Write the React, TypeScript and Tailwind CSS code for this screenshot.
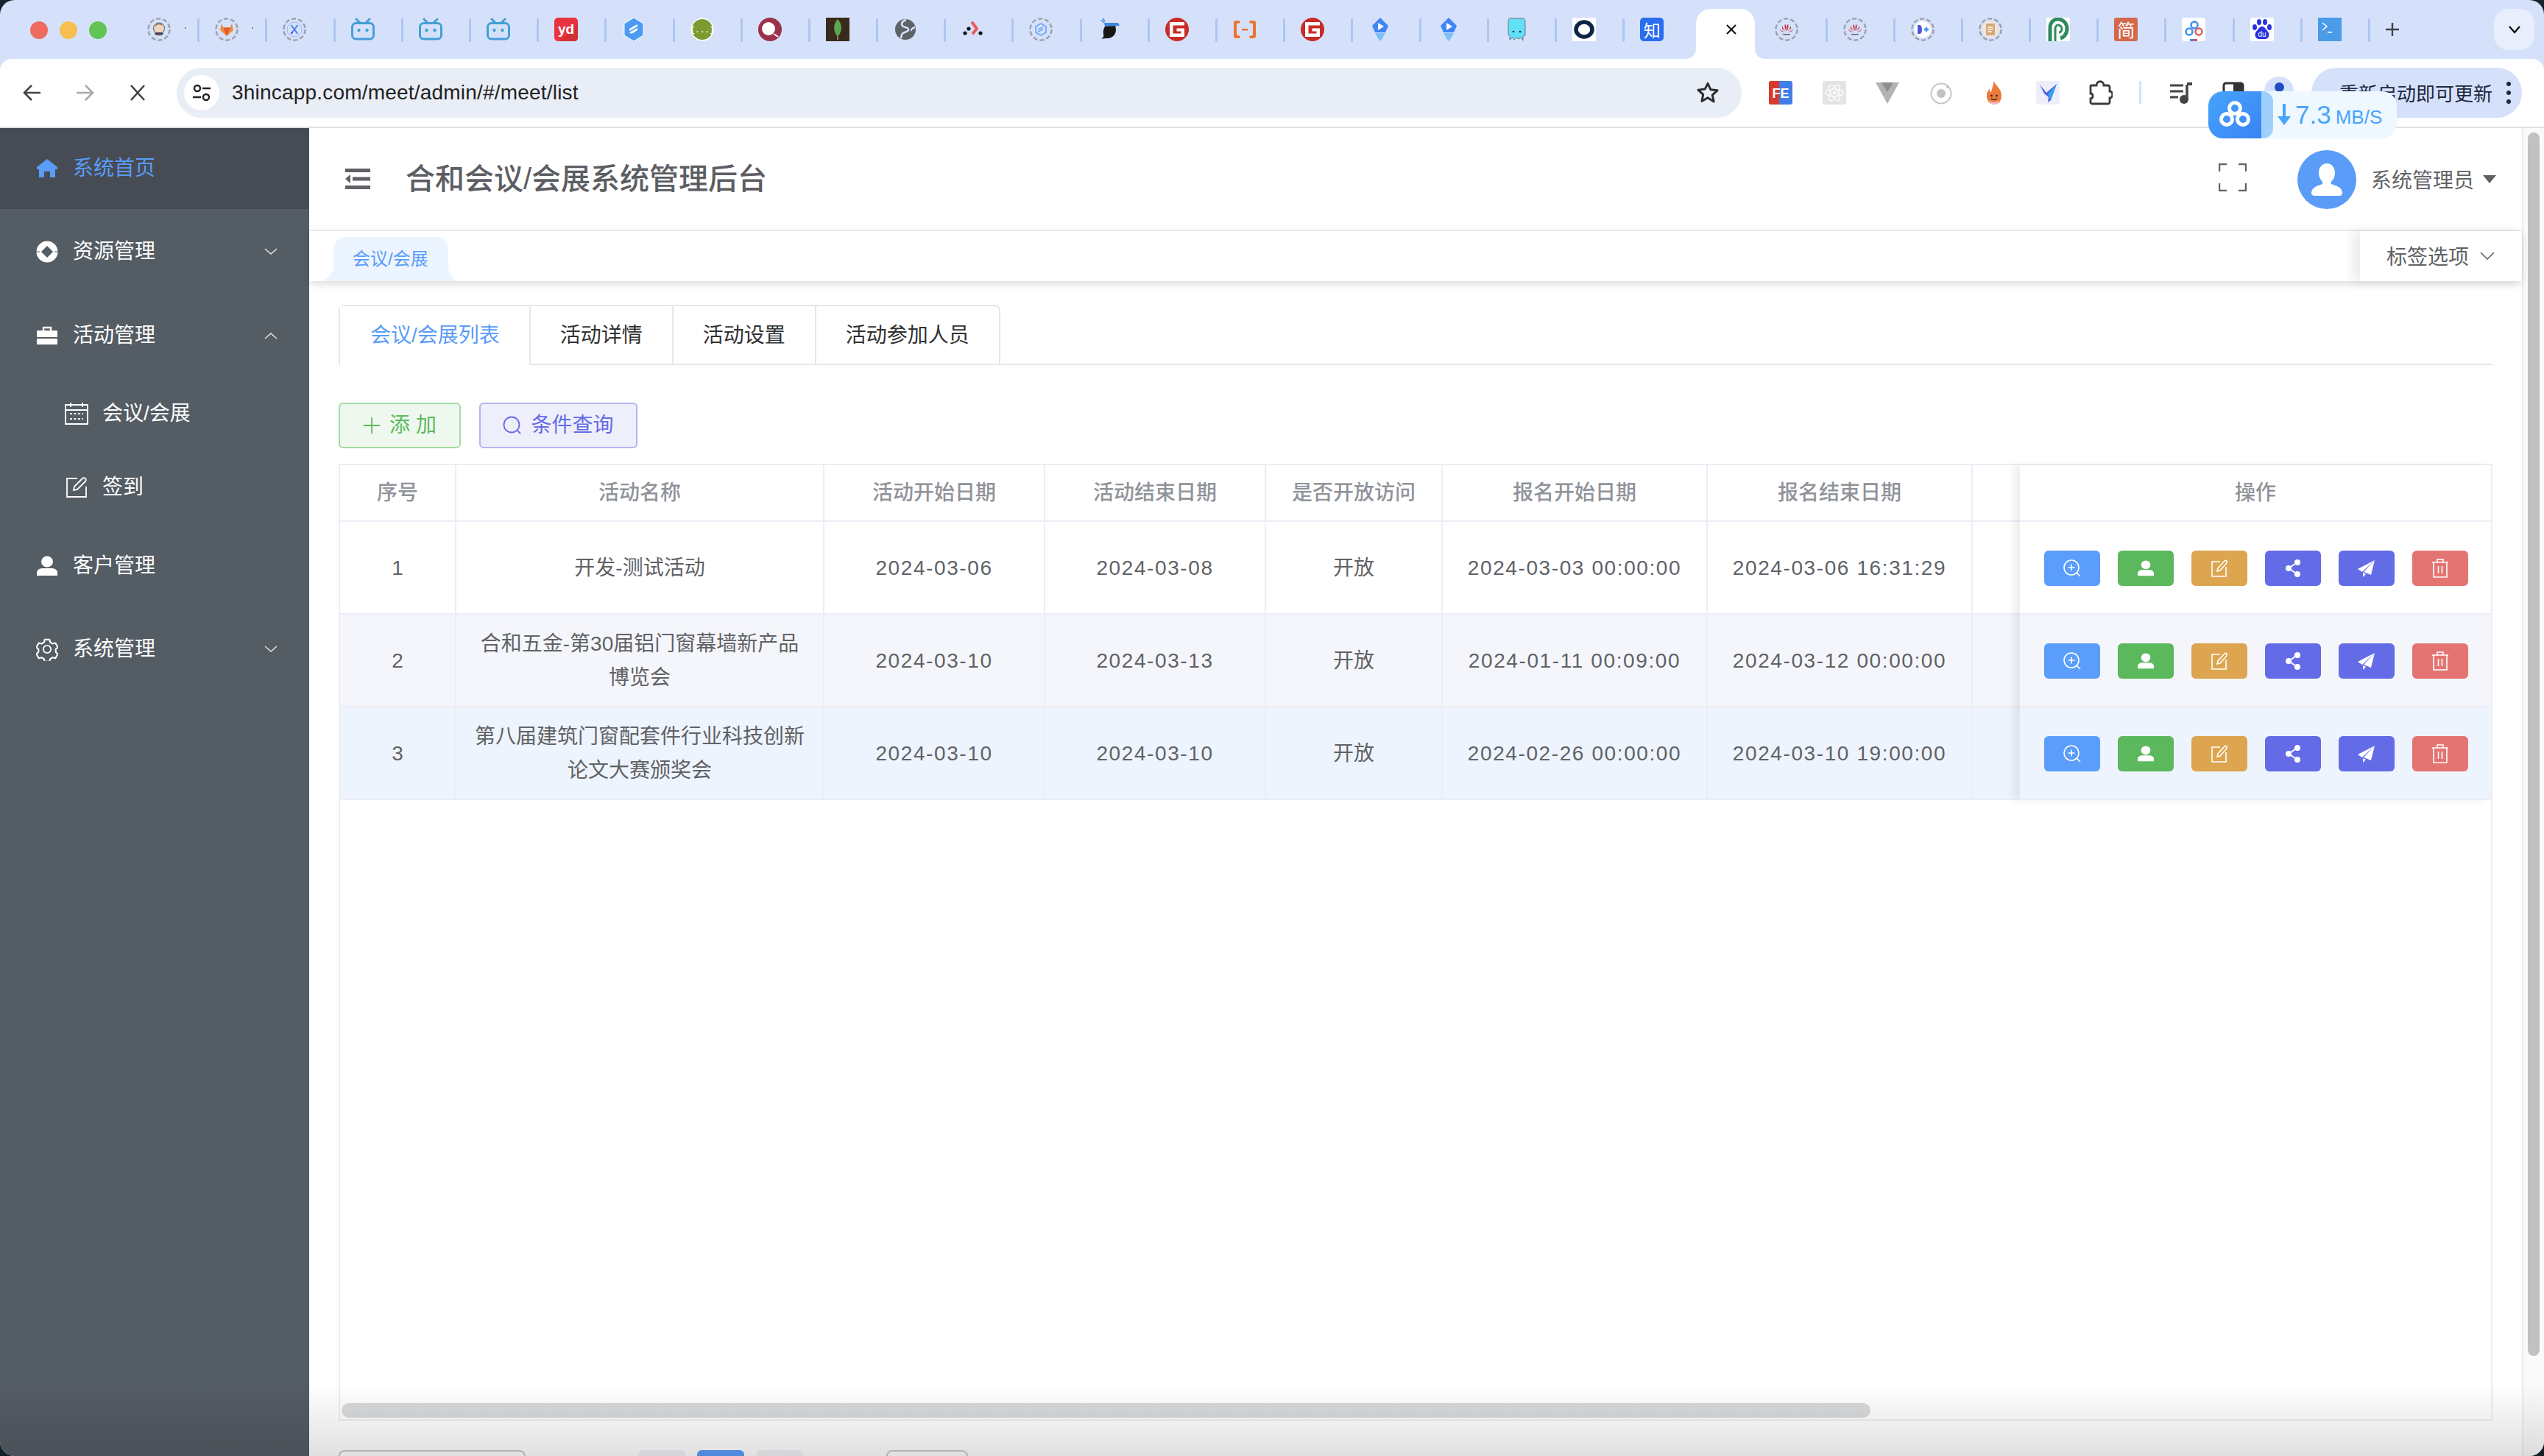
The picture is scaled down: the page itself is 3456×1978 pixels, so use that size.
import type { ReactNode } from "react";

const Ring = ({ children }: { children?: ReactNode }) => (
  <svg width="32" height="32" viewBox="0 0 32 32">
    <circle cx="16" cy="16" r="14.6" fill="none" stroke="#9a9fa9" strokeWidth="2.4" strokeDasharray="6.2 3" />
    {children}
  </svg>
);

const Fav = ({ children }: { children: ReactNode }) => (
  <svg width="32" height="32" viewBox="0 0 32 32">
    {children}
  </svg>
);

const Bili = () => (
  <Fav>
    <rect x="1.5" y="7.5" width="29" height="21.5" rx="5" fill="none" stroke="#449fd5" strokeWidth="3" />
    <path d="M7 2l5 5M25 2l-5 5" stroke="#449fd5" strokeWidth="3" strokeLinecap="round" />
    <circle cx="10.5" cy="17" r="2.2" fill="#449fd5" />
    <circle cx="21.5" cy="17" r="2.2" fill="#449fd5" />
  </Fav>
);

const RedG = () => (
  <Fav>
    <circle cx="16" cy="16" r="16" fill="#c92b27" />
    <path d="M6 6h20v4.500H10.500v11h11v-3h-6v-4H26V26H6z" fill="#fff" />
  </Fav>
);

const Diamond = () => (
  <Fav>
    <path d="M16 0l11 11-4 9H9l-4-9z" fill="#3f85f5" />
    <path d="M13 7l8 5-8 5z" fill="#fff" />
    <path d="M9 21h14l-4 7-3 4-3-4z" fill="#7cc0f6" />
  </Fav>
);

const Huawei = () => (
  <Ring>
    <g fill="#c9252c">
      <path d="M15.400 18c-1.600-3-2.400-6-1.600-9 1.400.6 2 3 1.600 9z" />
      <path d="M16.600 18c1.600-3 2.400-6 1.600-9-1.400.6-2 3-1.600 9z" />
      <path d="M14.800 18.500c-2.300-2-4-4.500-4.300-7-1.500 1.800-.5 4.500 4.300 7z" />
      <path d="M17.200 18.500c2.300-2 4-4.500 4.300-7 1.500 1.800.5 4.500-4.300 7z" />
      <path d="M14 19.400c-3-.6-5.500-2-6.500-4-.5 2.300 2.500 4.200 6.500 4z" />
      <path d="M18 19.400c3-.6 5.500-2 6.500-4 .5 2.300-2.500 4.200-6.500 4z" />
    </g>
    <rect x="11" y="22" width="10" height="1.500" fill="#666" />
  </Ring>
);

const tabIcons: ReactNode[] = [
  <Ring key="jenkins">
    <circle cx="16" cy="14.500" r="7.500" fill="#efd5c0" stroke="#555" strokeWidth="1" />
    <path d="M10 22c2 3 10 3 12 0l-1-2H11z" fill="#3c4a5c" />
    <path d="M13 22l3 2 3-2z" fill="#c9352c" />
    <path d="M11 11c2-3 7-3 9-1" fill="none" stroke="#8b6a55" strokeWidth="1.500" />
  </Ring>,
  <Ring key="gitlab">
    <path d="M16 25L7 17l2-9 2.500 5.500h9L23 8l2 9z" fill="#f08a3c" />
    <path d="M16 25l-4.500-11.500h9z" fill="#e5572d" />
  </Ring>,
  <Ring key="x">
    <circle cx="16" cy="16" r="10" fill="none" stroke="#9cbcf5" strokeWidth="1" />
    <path d="M11.500 10l9 12M20.500 10l-9 12" stroke="#4a84e8" strokeWidth="2" />
    <path d="M11.500 22l2-3" stroke="#7a38e8" strokeWidth="2" />
  </Ring>,
  <Bili key="b1" />,
  <Bili key="b2" />,
  <Bili key="b3" />,
  <Fav key="yd">
    <rect width="32" height="32" rx="5" fill="#e9343f" />
    <path d="M32 8v19c0 3-2 5-5 5H8z" fill="#d22f33" />
    <text x="16" y="22" textAnchor="middle" fontSize="19" fontWeight="700" fill="#fff" fontFamily="Liberation Sans">yd</text>
  </Fav>,
  <Fav key="hex">
    <path d="M16 0l13 8v16l-13 8-13-8V8z" fill="#4b9bf5" stroke="#fff" strokeWidth="1" />
    <path d="M10 15l11-6v3l-11 6zM10 20l11-6v3l-8 5z" fill="#fff" />
  </Fav>,
  <Fav key="swagger">
    <circle cx="16" cy="16" r="15.500" fill="#fff" />
    <circle cx="16" cy="16" r="14" fill="#7c9a2f" />
    <text x="16" y="20" textAnchor="middle" fontSize="11" fontWeight="700" fill="#fff" fontFamily="Liberation Mono">{"{...}"}</text>
  </Fav>,
  <Fav key="q">
    <circle cx="16" cy="16" r="16" fill="#9c314c" />
    <circle cx="14" cy="15" r="9" fill="#fff" />
    <path d="M21 22l6 4" stroke="#fff" strokeWidth="2" />
  </Fav>,
  <Fav key="mongo">
    <rect width="32" height="32" fill="#3a2a1b" />
    <path d="M16 2c6 6 7 16 0 24-7-8-6-18 0-24z" fill="#5ba850" />
    <rect x="15" y="24" width="2" height="6" fill="#8a7a60" />
  </Fav>,
  <Fav key="globe">
    <circle cx="16" cy="16" r="14" fill="#5f6368" />
    <path d="M17 3c-6 2-8 6-4 9 4 2 8 1 7 5-1 3-7 2-9 6l-1 5" fill="none" stroke="#d5e1fb" strokeWidth="2.500" />
    <path d="M29 13c-3 1-6 3-5 5" fill="none" stroke="#d5e1fb" strokeWidth="2.500" />
  </Fav>,
  <Fav key="dots">
    <circle cx="5" cy="21" r="2.600" fill="#111" />
    <circle cx="10" cy="15" r="2.600" fill="#111" />
    <circle cx="26" cy="21" r="2.600" fill="#111" />
    <path d="M15 7l6 8-5 6" fill="none" stroke="#ec5a60" strokeWidth="4" strokeLinecap="round" strokeLinejoin="round" />
  </Fav>,
  <Ring key="cube">
    <path d="M16 8l7 4v8l-7 4-7-4v-8z" fill="none" stroke="#6fa8f5" strokeWidth="1.800" />
    <path d="M12 16l7-3M12 19l7-3" stroke="#6fa8f5" strokeWidth="1.500" />
  </Ring>,
  <Fav key="ninja">
    <path d="M24 11c3 8-1 16-9 17-4 0-7 0-10 1 3-2 4-4 3-7-1-6 2-13 8-14 4-1 7 0 8 3z" fill="#191616" />
    <path d="M9 7l19 0 2 4-20 1z" fill="#3f88e0" />
    <path d="M9 7L5 3M10 5L7 1" stroke="#3f88e0" strokeWidth="1.500" />
  </Fav>,
  <RedG key="g1" />,
  <Fav key="ali">
    <path d="M9 4H4c-2 0-3 1-3 3v18c0 2 1 3 3 3h5l1-3-5-1V8l5-1zM23 4h5c2 0 3 1 3 3v18c0 2-1 3-3 3h-5l-1-3 5-1V8l-5-1z" fill="#f1722a" />
    <rect x="12" y="15" width="8" height="2.500" fill="#f1722a" />
  </Fav>,
  <RedG key="g2" />,
  <Diamond key="d1" />,
  <Diamond key="d2" />,
  <Fav key="squid">
    <path d="M7 1h18c2 0 3 2 3 4v19l-3 1v6l-3-4-3 2-3-2-3 3-2-3-4 3v-5l-2-2V5c0-2 1-4 2-4z" fill="#62e0f8" stroke="#6b7680" strokeWidth="1" />
    <circle cx="12" cy="19" r="1.300" fill="#222" />
    <circle cx="21" cy="19" r="1.300" fill="#222" />
  </Fav>,
  <Fav key="o">
    <rect width="32" height="32" fill="#fff" />
    <ellipse cx="16" cy="16" rx="11" ry="10" fill="none" stroke="#0c2547" strokeWidth="5.500" />
  </Fav>,
  <div key="zhihu" className="w-[32px] h-[32px] rounded-[5px] bg-[#2a6ef0] text-white text-[23px] leading-[32px] text-center font-['Noto_Sans_CJK_SC',sans-serif]">知</div>,
  null,
  <Huawei key="h1" />,
  <Huawei key="h2" />,
  <Ring key="dplus">
    <circle cx="16" cy="16" r="11" fill="#fff" />
    <path d="M9 10h3c4 0 4 12 0 12H9z" fill="#4f55d8" />
    <path d="M18 16h6M21 13v6" stroke="#3a8ef5" strokeWidth="2.500" />
  </Ring>,
  <Ring key="doc">
    <circle cx="16" cy="16" r="11" fill="#f4e5d5" />
    <rect x="10" y="8" width="12" height="16" rx="1" fill="#d8a878" />
    <path d="M12.500 13h7M12.500 16h7M12.500 19h5" stroke="#fff" strokeWidth="1.300" />
  </Ring>,
  <Fav key="p">
    <rect width="32" height="32" fill="#fff" />
    <path d="M5 32V14C5 6 10 2 16 2s12 5 12 13-5 12-9 13" fill="none" stroke="#2f8a5f" strokeWidth="5" />
    <path d="M12 32V15c0-3 2-5 4-5s5 2 5 5-2 5-4 5" fill="none" stroke="#2f8a5f" strokeWidth="3" />
  </Fav>,
  <div key="jian" className="w-[32px] h-[32px] rounded-[3px] bg-[#d2694d] text-white text-[24px] leading-[32px] text-center font-['Noto_Sans_CJK_SC',sans-serif]">简</div>,
  <Fav key="pan">
    <rect width="32" height="32" rx="4" fill="#fff" />
    <circle cx="17" cy="10" r="4.500" fill="none" stroke="#3a8ef5" strokeWidth="2.500" />
    <circle cx="10" cy="19" r="4.500" fill="none" stroke="#3a8ef5" strokeWidth="2.500" />
    <circle cx="23" cy="19" r="4.500" fill="none" stroke="#e8584f" strokeWidth="2.500" />
    <rect x="11" y="29" width="5" height="3" fill="#3a8ef5" />
    <rect x="16" y="29" width="5" height="3" fill="#e8484f" />
  </Fav>,
  <Fav key="paw">
    <rect width="32" height="32" rx="3" fill="#fff" />
    <g fill="#2932e1">
      <ellipse cx="6" cy="13" rx="3" ry="4" />
      <ellipse cx="12" cy="6" rx="3" ry="4" />
      <ellipse cx="20" cy="6" rx="3" ry="4" />
      <ellipse cx="26" cy="13" rx="3" ry="4" />
      <path d="M16 12c4 0 5 4 8 7 3 4 1 10-4 10h-8c-5 0-7-6-4-10 3-3 4-7 8-7z" />
    </g>
    <text x="16" y="26" textAnchor="middle" fontSize="10" fill="#fff" fontFamily="Liberation Sans">du</text>
  </Fav>,
  <Fav key="term">
    <rect width="32" height="32" fill="#4a9be8" />
    <path d="M6 7l6 5-6 5" fill="none" stroke="#fff" strokeWidth="1.600" />
    <rect x="13" y="19" width="6" height="1.600" fill="#fff" />
  </Fav>,
];

const ActiveTab = () => (
  <div className="relative h-[68px] w-[80px] mt-[12px] ml-[5px] mr-[6px] rounded-t-[20px] bg-white flex items-center justify-center">
    <svg className="absolute left-[-14px] bottom-0" width="14" height="14" viewBox="0 0 14 14">
      <path d="M14 0v14H0c8 0 14-6 14-14z" fill="#fff" />
    </svg>
    <svg className="absolute right-[-14px] bottom-0" width="14" height="14" viewBox="0 0 14 14">
      <path d="M0 0v14h14C6 14 0 8 0 0z" fill="#fff" />
    </svg>
    <svg className="mt-[-12px] ml-[16px]" width="16" height="16" viewBox="0 0 16 16">
      <path d="M2 2l12 12M14 2L2 14" stroke="#111" strokeWidth="2" />
    </svg>
  </div>
);

const TabStrip = () => (
  <div className="h-[80px] shrink-0 bg-[#d5e1fb] flex items-start rounded-t-[20px] pl-[41px]">
    <div className="flex h-[80px] items-center gap-[16px] w-[138px] pt-[2px]">
      <div className="w-[24px] h-[24px] rounded-full bg-[#ef6a5f]" />
      <div className="w-[24px] h-[24px] rounded-full bg-[#f6bf4f]" />
      <div className="w-[24px] h-[24px] rounded-full bg-[#61c554]" />
    </div>
    {tabIcons.map((icon, i) =>
      icon === null ? (
        <ActiveTab key={i} />
      ) : (
        <div key={i} className="relative w-[92.2px] h-[80px] pl-[21px] pt-[24px] flex items-start">
          {icon}
          {i < 2 && <div className="absolute left-[72px] top-[37px] w-[1px] h-[2px] bg-[#333]" />}
          {i !== 22 && <div className="absolute right-0 top-[25px] w-[3px] h-[32px] rounded-sm bg-[#adc5f3]" />}
        </div>
      )
    )}
    <div className="ml-[14px] mt-[24px] w-[32px] h-[32px] flex items-center justify-center">
      <svg width="20" height="20" viewBox="0 0 20 20">
        <path d="M10 1v18M1 10h18" stroke="#444" strokeWidth="2.400" />
      </svg>
    </div>
    <div className="ml-auto mr-[13px] mt-[12px] w-[55px] h-[56px] rounded-[20px] bg-[#e8eefc] flex items-center justify-center">
      <svg width="18" height="12" viewBox="0 0 18 12">
        <path d="M2 2l7 8 7-8" fill="none" stroke="#111" strokeWidth="2.400" />
      </svg>
    </div>
  </div>
);

const extensions: ReactNode[] = [
  <svg key="fe" width="32" height="32" viewBox="0 0 32 32">
    <rect width="32" height="32" rx="3" fill="#3f7ee8" />
    <path d="M3 0h11v32H3c-2 0-3-1-3-3V3c0-2 1-3 3-3z" fill="#d93a2b" />
    <text x="16" y="23" textAnchor="middle" fontSize="18" fontWeight="700" fill="#fff" fontFamily="Liberation Sans">FE</text>
  </svg>,
  <svg key="react" width="32" height="32" viewBox="0 0 32 32">
    <rect width="32" height="32" rx="2" fill="#e4e4e4" />
    <g fill="none" stroke="#fff" strokeWidth="1.200">
      <ellipse cx="16" cy="16" rx="12" ry="5" />
      <ellipse cx="16" cy="16" rx="12" ry="5" transform="rotate(60 16 16)" />
      <ellipse cx="16" cy="16" rx="12" ry="5" transform="rotate(120 16 16)" />
    </g>
    <circle cx="16" cy="16" r="2.200" fill="#fff" />
  </svg>,
  <svg key="vue" width="32" height="32" viewBox="0 0 32 32">
    <path d="M0 2h32L16 31z" fill="#b3b3b3" />
    <path d="M8 2h16l-8 13z" fill="#8f8f8f" />
  </svg>,
  <svg key="ion" width="32" height="32" viewBox="0 0 32 32">
    <circle cx="16" cy="17" r="13.500" fill="none" stroke="#c8c8c8" strokeWidth="2" />
    <circle cx="16" cy="17" r="6" fill="#c2c2c2" />
    <circle cx="25" cy="8" r="2" fill="#c2c2c2" />
  </svg>,
  <svg key="fire" width="32" height="32" viewBox="0 0 32 32">
    <path d="M16 0c1 6 10 10 10 20 0 7-4 12-10 12S6 27 6 20c0-4 2-8 4-9 0 3 1 4 2 4 1-5 3-10 4-15z" fill="#ec7a3a" />
    <path d="M9 25c2 5 12 5 14 0-1 5-3 7-7 7s-6-2-7-7z" fill="#f5b8c4" />
    <circle cx="12.500" cy="20" r="1.300" fill="#222" />
    <circle cx="19.500" cy="20" r="1.300" fill="#222" />
    <path d="M12 24c2 2 6 2 8 0" fill="none" stroke="#222" strokeWidth="1.200" />
  </svg>,
  <svg key="bird" width="32" height="32" viewBox="0 0 32 32">
    <rect width="32" height="32" rx="3" fill="#eeeefb" />
    <path d="M5 5l9 11 14-12-8 22-4 3 1-7-6-5z" fill="#4a5fe0" />
    <path d="M28 4l-8 22-4-8z" fill="#36a3ef" />
  </svg>,
  <svg key="puzzle" width="32" height="34" viewBox="0 0 32 34">
    <path d="M3 7h7c0-7 10-7 10 0h6c1 0 2 1 2 2v6c5 0 5 9 0 9v6c0 1-1 2-2 2H4c-1 0-2-1-2-2v-5c4 0 4-7 0-7V8c0-.6.4-1 1-1z" fill="none" stroke="#3b3b3b" strokeWidth="2.800" />
  </svg>,
];

const Toolbar = () => (
  <div className="h-[94px] shrink-0 bg-[#d5e1fb]">
    <div className="h-[94px] bg-white rounded-t-[16px] border-b-2 border-[#dfdfdf] flex items-start pt-[12px] relative">
      <div className="w-[240px] h-[68px] flex items-center">
        <svg className="ml-[31px]" width="26" height="26" viewBox="0 0 26 26">
          <path d="M24 13H3M12 3L2 13l10 10" fill="none" stroke="#444" strokeWidth="2.600" />
        </svg>
        <svg className="ml-[45px]" width="26" height="26" viewBox="0 0 26 26">
          <path d="M2 13h21M14 3l10 10-10 10" fill="none" stroke="#a9a9a9" strokeWidth="2.600" />
        </svg>
        <svg className="ml-[48px]" width="22" height="22" viewBox="0 0 22 22">
          <path d="M2 1l18 20M20 1L2 21" stroke="#444" strokeWidth="2.600" />
        </svg>
      </div>
      <div className="w-[2126px] h-[68px] rounded-full bg-[#e9edf6] flex items-center pl-[10px]">
        <div className="w-[48px] h-[48px] rounded-full bg-white flex items-center justify-center">
          <svg width="26" height="26" viewBox="0 0 26 26">
            <circle cx="7" cy="7" r="4" fill="none" stroke="#222" strokeWidth="2.400" />
            <path d="M14 7h11M1 19h11" stroke="#222" strokeWidth="2.600" />
            <circle cx="19" cy="19" r="4" fill="none" stroke="#222" strokeWidth="2.400" />
          </svg>
        </div>
        <span className="ml-[17px] text-[28px] leading-[34px] text-[#222] font-['Liberation_Sans','Noto_Sans_CJK_SC',sans-serif] tracking-[0.2px]">3hincapp.com/meet/admin/#/meet/list</span>
        <svg className="ml-auto mr-[30px]" width="32" height="32" viewBox="0 0 24 24">
          <path d="M12 2.500l2.900 6.300 6.900.8-5.100 4.700 1.400 6.800L12 17.100l-6.100 3.500 1.400-6.800-5.100-4.700 6.900-.8z" fill="none" stroke="#2c2c2c" strokeWidth="2.200" strokeLinejoin="round" />
        </svg>
      </div>
      <div className="flex items-center h-[68px] ml-[37px] gap-[40.500px]">
        {extensions.map((e, i) => (
          <div key={i} className="w-[32px] h-[32px] flex items-center justify-center">
            {e}
          </div>
        ))}
      </div>
      <div className="ml-[36px] h-[68px] flex items-center">
        <div className="w-[3px] h-[32px] rounded-sm bg-[#d5e1fb]" />
        <svg className="ml-[38px]" width="32" height="32" viewBox="0 0 32 32">
          <path d="M1 6h18M1 14h18M1 22h11" stroke="#444" strokeWidth="3" />
          <path d="M24 5v20" stroke="#444" strokeWidth="3.500" />
          <path d="M24 4h7" stroke="#444" strokeWidth="4" />
          <circle cx="20" cy="25" r="6" fill="#444" />
        </svg>
        <svg className="ml-[40px]" width="30" height="30" viewBox="0 0 30 30">
          <rect x="2" y="2" width="26" height="26" rx="3" fill="#fff" stroke="#333" strokeWidth="3" />
          <rect x="15" y="2" width="13" height="26" fill="#333" />
        </svg>
        <div className="ml-[27px] w-[40px] h-[44px] rounded-full bg-[#d5e1fb] flex justify-center pt-[8px]">
          <div className="w-[13px] h-[13px] rounded-full bg-[#1f4fc0]" />
        </div>
      </div>
      <div className="ml-[24px] w-[286px] h-[68px] rounded-full bg-[#d5e1fb] flex items-center pl-[38px]">
        <span className="text-[26px] leading-[32px] text-[#1c2740] font-['Noto_Sans_CJK_SC',sans-serif]">重新启动即可更新</span>
        <svg className="ml-[18px]" width="8" height="32" viewBox="0 0 8 32">
          <circle cx="4" cy="4" r="3" fill="#1c2740" />
          <circle cx="4" cy="16" r="3" fill="#1c2740" />
          <circle cx="4" cy="28" r="3" fill="#1c2740" />
        </svg>
      </div>
    </div>
  </div>
);

// baidu netdisk speed widget sits over the browser toolbar
const SpeedFloat = () => (
  <div className="absolute left-[3000px] top-[124px] z-20 w-[256px] h-[64px] rounded-[20px] bg-[#eff7ff] flex items-center overflow-hidden">
    <div className="w-[72px] h-[64px] bg-gradient-to-br from-[#46a5fa] to-[#3b82f6] flex items-center justify-center">
      <svg width="42" height="38" viewBox="0 0 42 38">
        <g fill="none" stroke="#fff" strokeWidth="5">
          <circle cx="21" cy="10" r="7.500" />
          <circle cx="10" cy="25" r="7.500" />
          <circle cx="32" cy="25" r="7.500" />
        </g>
      </svg>
    </div>
    <div className="w-[16px] h-[64px] rounded-r-[14px] bg-[#9fd0fb]" />
    <svg className="ml-[5px]" width="20" height="30" viewBox="0 0 20 30">
      <path d="M10 0v20" stroke="#46a5fa" strokeWidth="4" />
      <path d="M1 17h18l-9 12z" fill="#46a5fa" />
    </svg>
    <span className="ml-[5px] text-[35px] leading-[40px] font-medium text-[#46a5fa] font-['Liberation_Sans',sans-serif]">7.3</span>
    <span className="ml-[6px] mt-[6px] text-[26px] leading-[30px] text-[#46a5fa] font-['Liberation_Sans',sans-serif]">MB/S</span>
  </div>
);

const HomeIcon = () => (
  <svg width="28" height="28" viewBox="0 0 28 28">
    <path d="M14 1L0 12v3h3v11h7v-8h8v8h7V15h3v-3z" fill="#5a9cf8" />
  </svg>
);

const CompassIcon = () => (
  <svg width="30" height="30" viewBox="0 0 30 30">
    <circle cx="15" cy="15" r="14.500" fill="#fff" />
    <path d="M15 7l8 8-8 8-8-8z" fill="#545c64" />
    <path d="M0 15h5M25 15h5" stroke="#545c64" strokeWidth="1" />
  </svg>
);

const CaseIcon = () => (
  <svg width="28" height="28" viewBox="0 0 28 28">
    <path d="M0 7h28v9H0zM0 18h28v8H0z" fill="#fff" />
    <path d="M9 7V3h10v4" fill="none" stroke="#fff" strokeWidth="2.400" />
  </svg>
);

const CalendarIcon = () => (
  <svg width="32" height="32" viewBox="0 0 32 32">
    <path d="M1 4h30v26H1zM1 11h30M8 1v6M24 1v6" fill="none" stroke="#fff" strokeWidth="1.800" />
    <path d="M7 16h18M7 23h18" stroke="#fff" strokeWidth="1.800" strokeDasharray="3 2.500" />
  </svg>
);

const SignIcon = () => (
  <svg width="28" height="28" viewBox="0 0 28 28">
    <path d="M15 2H1v25h26V13" fill="none" stroke="#fff" strokeWidth="1.800" />
    <path d="M10 18l1-5L22 2c1-1 3-1 4 0s1 3 0 4L15 17z" fill="none" stroke="#fff" strokeWidth="1.800" />
  </svg>
);

const UserIcon = ({ size = 28, color = "#fff" }: { size?: number; color?: string }) => (
  <svg width={size} height={size} viewBox="0 0 28 28">
    <ellipse cx="14" cy="8" rx="8" ry="7.500" fill={color} />
    <path d="M0 27v-4c0-4 4-6 8-6h12c4 0 8 2 8 6v4z" fill={color} />
  </svg>
);

const GearIcon = () => (
  <svg width="32" height="32" viewBox="0 0 32 32">
    <path
      d="M12.500 2h7l1 4 3.500 2 4-1 3.500 6-3 3v4l3 3-3.500 6-4-1-3.500 2-1 4h-7l-1-4-3.500-2-4 1-3.500-6 3-3v-4l-3-3 3.500-6 4 1 3.500-2z"
      fill="none"
      stroke="#fff"
      strokeWidth="2.200"
      strokeLinejoin="round"
    />
    <circle cx="16" cy="16" r="5.500" fill="none" stroke="#fff" strokeWidth="2" />
  </svg>
);

const Chev = ({ up = false }: { up?: boolean }) => (
  <svg width="18" height="10" viewBox="0 0 18 10" className="absolute left-[359px]">
    <path d={up ? "M1 9l8-7 8 7" : "M1 1l8 7 8-7"} fill="none" stroke="#e6e8ea" strokeWidth="1.400" />
  </svg>
);

const menuText = "text-[28px] leading-[36px] font-['Liberation_Sans','Noto_Sans_CJK_SC',sans-serif]";

const MenuItem = ({ h, icon, label, arrow, active }: { h: string; icon: ReactNode; label: string; arrow?: "up" | "down"; active?: boolean }) => (
  <div className={`relative flex items-center pl-[49px] ${h} ${active ? "bg-[#474c54] text-[#5a9cf8]" : "text-white"}`}>
    <div className="w-[30px] flex justify-center">{icon}</div>
    <span className={`ml-[20px] ${menuText}`}>{label}</span>
    {arrow && <Chev up={arrow === "up"} />}
  </div>
);

const SubItem = ({ icon, label }: { icon: ReactNode; label: string }) => (
  <div className="flex items-center h-[100px] pl-[88px] text-white">
    <div className="w-[32px] flex justify-center">{icon}</div>
    <span className={`ml-[19px] ${menuText}`}>{label}</span>
  </div>
);

const Sidebar = () => (
  <div className="w-[420px] shrink-0 bg-[#545c64]">
    <MenuItem h="h-[110px]" icon={<HomeIcon />} label="系统首页" active />
    <MenuItem h="h-[116px]" icon={<CompassIcon />} label="资源管理" arrow="down" />
    <MenuItem h="h-[112px]" icon={<CaseIcon />} label="活动管理" arrow="up" />
    <SubItem icon={<CalendarIcon />} label="会议/会展" />
    <SubItem icon={<SignIcon />} label="签到" />
    <MenuItem h="h-[114px]" icon={<UserIcon />} label="客户管理" />
    <MenuItem h="h-[112px]" icon={<GearIcon />} label="系统管理" arrow="down" />
  </div>
);

const TopHeader = () => (
  <div className="h-[140px] shrink-0 border-b-2 border-[#eeeeee] flex items-center pl-[49px] pr-[35px]">
    <svg width="34" height="28" viewBox="0 0 34 28">
      <rect width="34" height="5" fill="#5f6166" />
      <rect x="10" y="11.500" width="24" height="5" fill="#5f6166" />
      <path d="M7 8v12L0 14z" fill="#5f6166" />
      <rect y="23" width="34" height="5" fill="#5f6166" />
    </svg>
    <span className="ml-[48px] text-[40px] leading-[50px] font-medium text-[#5c5e63] font-['Liberation_Sans','Noto_Sans_CJK_SC',sans-serif]">合和会议/会展系统管理后台</span>
    <svg className="ml-auto mt-[-4px]" width="38" height="38" viewBox="0 0 38 38">
      <path d="M1 11V1h10M27 1h10v10M37 27v10H27M11 37H1V27" fill="none" stroke="#5f6166" strokeWidth="2.400" />
    </svg>
    <div className="ml-[69px] mt-[2px] w-[80px] h-[80px] rounded-full bg-[#5a9cf8] flex items-center justify-center">
      <svg width="44" height="46" viewBox="0 0 44 46">
        <path d="M22 1c7 0 11 6 11 13 0 5-2 9-5 12v3c5 2 15 4 15 12 0 3-2 4-5 4H6c-3 0-5-1-5-4 0-8 10-10 15-12v-3c-3-3-5-7-5-12C11 7 15 1 22 1z" fill="#fff" />
      </svg>
    </div>
    <span className={`ml-[20px] mt-[6px] ${menuText} text-[#606266]`}>系统管理员</span>
    <svg className="ml-[12px]" width="18" height="11" viewBox="0 0 18 11">
      <path d="M0 0h18l-9 11z" fill="#606266" />
    </svg>
  </div>
);

const TagsBar = () => (
  <div className="relative z-10 h-[68px] shrink-0 bg-white shadow-[0_4px_10px_rgba(0,0,0,0.14)] flex items-end pl-[33px]">
    <div className="relative h-[60px] w-[156px] rounded-t-[16px] bg-[#ecf5ff] flex items-center pl-[26px]">
      <svg className="absolute left-[-16px] bottom-0" width="16" height="16" viewBox="0 0 16 16">
        <path d="M16 0v16H0c6-2 12-8 16-16z" fill="#ecf5ff" />
      </svg>
      <svg className="absolute right-[-10px] bottom-0" width="10" height="16" viewBox="0 0 10 16">
        <path d="M0 0v16h10C6 12 2 6 0 0z" fill="#ecf5ff" />
      </svg>
      <span className="text-[24px] leading-[30px] text-[#5a9cf8] font-['Liberation_Sans','Noto_Sans_CJK_SC',sans-serif]">会议/会展</span>
    </div>
    <div className="ml-auto w-[220px] h-[68px] bg-white shadow-[-10px_0_14px_rgba(0,0,0,0.08)] flex items-center pl-[36px]">
      <span className={`mt-[4px] ${menuText} text-[#606266]`}>标签选项</span>
      <svg className="ml-[15px] mt-[-2px]" width="20" height="11" viewBox="0 0 20 11">
        <path d="M1 1l9 9 9-9" fill="none" stroke="#606266" strokeWidth="1.600" />
      </svg>
    </div>
  </div>
);

const tabNames = ["会议/会展列表", "活动详情", "活动设置", "活动参加人员"];

const PageTabs = () => (
  <div className="mt-[32px] h-[82px] border-b-2 border-[#e4e7ed] flex">
    <div className="flex h-[82px] border-2 border-b-0 border-[#e4e7ed] rounded-t-[8px]">
      {tabNames.map((t, i) => (
        <div
          key={t}
          className={`h-[80px] flex items-center ${i < 3 ? "border-r-2 border-[#e4e7ed]" : ""} ${i === 0 ? "pl-[41px] pr-[40px] text-[#5a9cf8] bg-white" : "px-[40px] h-[78px] text-[#303133]"} ${menuText}`}
        >
          {t}
        </div>
      ))}
    </div>
  </div>
);

const Toolbuttons = () => (
  <div className="mt-[51px] flex gap-[25px]">
    <div className={`w-[166px] h-[62px] rounded-[6px] border-2 border-[#a3dba3] bg-[#eef8ee] text-[#5cb85c] flex items-center justify-center ${menuText}`}>
      <svg width="24" height="24" viewBox="0 0 24 24" className="mr-[12px]">
        <path d="M12 1v22M1 12h22" stroke="#5cb85c" strokeWidth="1.800" />
      </svg>
      添 加
    </div>
    <div className={`w-[215px] h-[62px] rounded-[6px] border-2 border-[#b1b4f2] bg-[#efeffc] text-[#636be6] flex items-center justify-center ${menuText}`}>
      <svg width="26" height="26" viewBox="0 0 26 26" className="mr-[12px]">
        <circle cx="12" cy="12" r="10.500" fill="none" stroke="#636be6" strokeWidth="1.800" />
        <path d="M20 20l4 4" stroke="#636be6" strokeWidth="1.800" />
      </svg>
      条件查询
    </div>
  </div>
);

const widths = ["w-[158px]", "w-[500px]", "w-[300px]", "w-[300px]", "w-[240px]", "w-[360px]", "w-[360px]"];
const heads = ["序号", "活动名称", "活动开始日期", "活动结束日期", "是否开放访问", "报名开始日期", "报名结束日期"];

const rows = [
  { bg: "bg-white", cells: ["1", ["开发-测试活动"], "2024-03-06", "2024-03-08", "开放", "2024-03-03 00:00:00", "2024-03-06 16:31:29"] },
  { bg: "bg-[#f5f6fb]", cells: ["2", ["合和五金-第30届铝门窗幕墙新产品", "博览会"], "2024-03-10", "2024-03-13", "开放", "2024-01-11 00:09:00", "2024-03-12 00:00:00"] },
  { bg: "bg-[#eef4fd]", cells: ["3", ["第八届建筑门窗配套件行业科技创新", "论文大赛颁奖会"], "2024-03-10", "2024-03-10", "开放", "2024-02-26 00:00:00", "2024-03-10 19:00:00"] },
];

const cellText = "text-[28px] font-['Liberation_Sans','Noto_Sans_CJK_SC',sans-serif]";

const actions = [
  {
    bg: "bg-[#5b9dfa]",
    icon: (
      <svg width="26" height="26" viewBox="0 0 26 26" fill="none" stroke="#fff">
        <circle cx="12" cy="12" r="10" strokeWidth="1.600" />
        <path d="M7.500 12h9M12 7.500v9" strokeWidth="1.600" />
        <path d="M19 19l5 5" strokeWidth="1.600" />
      </svg>
    ),
  },
  { bg: "bg-[#5cb85c]", icon: <UserIcon size={22} /> },
  {
    bg: "bg-[#dda550]",
    icon: (
      <svg width="24" height="24" viewBox="0 0 24 24" fill="none" stroke="#fff" strokeWidth="1.600">
        <path d="M13 3H2v20h19V10" />
        <path d="M9 16l1-4 9-10c1-1 3-1 3 1s0 2-1 3l-8 9z" />
      </svg>
    ),
  },
  {
    bg: "bg-[#636be6]",
    icon: (
      <svg width="22" height="24" viewBox="0 0 22 24" fill="#fff">
        <circle cx="17" cy="4" r="4" />
        <circle cx="5" cy="12" r="4" />
        <circle cx="17" cy="20" r="4" />
        <path d="M17 4L5 12l12 8" fill="none" stroke="#fff" strokeWidth="2" />
      </svg>
    ),
  },
  {
    bg: "bg-[#636be6]",
    icon: (
      <svg width="24" height="24" viewBox="0 0 24 24" fill="#fff">
        <path d="M23 1L0 13l6 4z" />
        <path d="M23 1L8 17l10 4z" />
        <path d="M7 18v6l4-4z" />
      </svg>
    ),
  },
  {
    bg: "bg-[#e37472]",
    icon: (
      <svg width="24" height="26" viewBox="0 0 24 26" fill="none" stroke="#fff" strokeWidth="1.600">
        <path d="M1 5h22M8 5V1h8v4M3 5v20h18V5M9.500 10v10M14.500 10v10" />
      </svg>
    ),
  },
];

const DataTable = () => (
  <div className="relative mt-[21px] h-[1300px] border-2 border-[#ebeef5] flex">
    <div className="flex-1 min-w-0 overflow-hidden">
      <div className="flex h-[77px] border-b-2 border-[#ebeef5]">
        {heads.map((h, i) => (
          <div key={h} className={`${widths[i]} shrink-0 border-r-2 border-[#ebeef5] flex items-center justify-center text-[#909399] font-medium ${cellText}`}>
            {h}
          </div>
        ))}
        <div className="flex-1" />
      </div>
      {rows.map((r, ri) => (
        <div key={ri} className={`flex h-[126px] border-b-2 border-[#ebeef5] ${r.bg}`}>
          {r.cells.map((c, i) => (
            <div key={i} className={`${widths[i]} shrink-0 border-r-2 border-[#ebeef5] flex flex-col items-center justify-center text-[#606266] pt-[1px] ${cellText} ${typeof c === "string" && c.length > 4 ? "tracking-[1.600px]" : ""}`}>
              {Array.isArray(c) ? c.map((l) => <div key={l} className="leading-[46px]">{l}</div>) : c}
            </div>
          ))}
          <div className="flex-1" />
        </div>
      ))}
    </div>
    <div className="relative z-10 w-[640px] shrink-0 shadow-[-8px_0_10px_rgba(0,0,0,0.07)] self-start bg-white">
      <div className={`h-[77px] border-b-2 border-[#ebeef5] flex items-center justify-center text-[#909399] font-medium ${cellText}`}>操作</div>
      {rows.map((r, ri) => (
        <div key={ri} className={`h-[126px] border-b-2 border-[#ebeef5] flex items-center justify-center gap-[24px] pt-[2px] pl-[2px] ${r.bg}`}>
          {actions.map((a, i) => (
            <div key={i} className={`w-[76px] h-[48px] rounded-[6px] flex items-center justify-center ${a.bg}`}>
              {a.icon}
            </div>
          ))}
        </div>
      ))}
    </div>
    <div className="absolute left-[2px] top-[1274px] z-20 w-[2077px] h-[20px] rounded-full bg-[#d9dadc]" />
  </div>
);

const Pagination = () => (
  <div className="mt-[40px] flex h-[50px]">
    <div className="w-[254px] rounded-[8px] border-2 border-[#c8c9cf] bg-white" />
    <div className="ml-[153px] w-[64px] rounded-[6px] bg-[#f0f2f5]" />
    <div className="ml-[16px] w-[64px] rounded-[6px] bg-[#5a9cf8]" />
    <div className="ml-[16px] w-[64px] rounded-[6px] bg-[#f0f2f5]" />
    <div className="ml-[113px] w-[111px] rounded-[8px] border-2 border-[#c8c9cf] bg-white" />
  </div>
);

export default function App() {
  return (
    <div className="relative w-[3456px] h-[1978px] overflow-hidden bg-[#14242c] flex flex-col">
      <TabStrip />
      <Toolbar />
      <SpeedFloat />
      <div className="flex flex-1 min-h-0 rounded-b-[20px] overflow-hidden bg-white">
        <Sidebar />
        <div className="flex-1 min-w-0 flex flex-col">
          <TopHeader />
          <TagsBar />
          <div className="px-[40px] shrink-0">
            <PageTabs />
            <Toolbuttons />
            <DataTable />
            <Pagination />
          </div>
        </div>
        <div className="w-[30px] shrink-0 border-l-2 border-[#ececec] bg-[#fafafa] pl-[6px] pt-[6px]">
          <div className="w-[16px] h-[1662px] rounded-full bg-[#c1c1c1]" />
        </div>
      </div>
      <div className="absolute inset-x-0 bottom-0 z-30 h-[100px] pointer-events-none bg-gradient-to-b from-transparent to-black/12" />
    </div>
  );
}
